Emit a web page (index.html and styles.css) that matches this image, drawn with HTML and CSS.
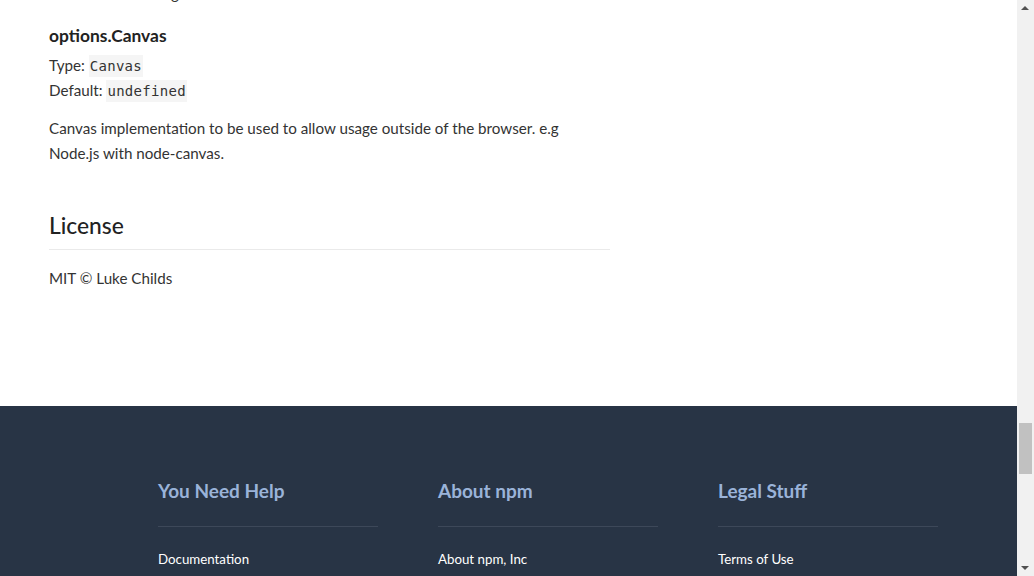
FILE: index.html
```html
<!DOCTYPE html>
<html>
<head>
<meta charset="utf-8">
<link rel="stylesheet" href="styles.css">
</head>
<body>
<div class="page">
  <main class="readme">
    <p class="cut">Disables smoothing</p>
    <h3 class="opt">options.Canvas</h3>
    <p class="meta">Type: <code>Canvas</code><br>Default: <code>undefined</code></p>
    <p class="desc">Canvas implementation to be used to allow usage outside of the browser. e.g Node.js with node-canvas.</p>
    <h2 class="lic">License</h2>
    <p class="mit">MIT © Luke Childs</p>
  </main>
  <footer class="foot">
    <div class="cols">
      <div class="col">
        <h4 class="colhead">You Need Help</h4>
        <a class="link">Documentation</a>
      </div>
      <div class="col">
        <h4 class="colhead">About npm</h4>
        <a class="link">About npm, Inc</a>
      </div>
      <div class="col">
        <h4 class="colhead">Legal Stuff</h4>
        <a class="link">Terms of Use</a>
      </div>
    </div>
  </footer>
</div>
<div class="scrollbar">
  <span class="arrow up"></span>
  <span class="thumb"></span>
  <span class="arrow down"></span>
</div>
</body>
</html>
```
FILE: styles.css
```css
html, body {
  margin: 0;
  padding: 0;
  height: 576px;
  overflow: hidden;
  background: #fff;
}
body {
  font-family: Lato, "Open Sans", sans-serif;
  color: #333;
}
.page {
  width: 1017px;
  height: 576px;
  display: flex;
  flex-direction: column;
  overflow: hidden;
}
.readme {
  width: 561px;
  padding-left: 49px;
  padding-bottom: 115px;
  font-size: 15.2px;
  line-height: 25px;
}
.readme p {
  margin: 0;
}
.cut {
  margin-top: -19px !important;
}
.opt {
  margin: 19px 0 0;
  font-size: 17.4px;
  line-height: 22px;
  font-weight: 700;
  color: #222;
}
.meta {
  margin-top: 6px !important;
}
code {
  font-family: "DejaVu Sans Mono", monospace;
  font-size: 14px;
  line-height: 1;
  background: #f5f5f5;
  padding: 3px 1px;
  letter-spacing: 0.3px;
}
.desc {
  margin-top: 13px !important;
}
.lic {
  margin: 44px 0 0;
  font-size: 22.8px;
  line-height: 30px;
  font-weight: 500;
  color: #222;
  padding-bottom: 9px;
  border-bottom: 1px solid #eaeaea;
}
.mit {
  margin-top: 16px !important;
}
.foot {
  flex: 1;
  background: #283445;
  padding-top: 73px;
}
.cols {
  display: grid;
  grid-template-columns: 220px 220px 220px;
  column-gap: 60px;
  padding-left: 158px;
}
.col {
  display: flex;
  flex-direction: column;
}
.colhead {
  margin: 0;
  font-size: 19px;
  line-height: 24px;
  font-weight: 700;
  color: #9ab3d9;
  padding-bottom: 23px;
  border-bottom: 1px solid #3d4859;
}
.link {
  margin-top: 22px;
  font-size: 13.3px;
  line-height: 20px;
  color: #fff;
}
.scrollbar {
  position: absolute;
  top: 0;
  right: 0;
  width: 17px;
  height: 576px;
  background: #f1f1f1;
}
.thumb {
  position: absolute;
  left: 2px;
  top: 423px;
  width: 13px;
  height: 51px;
  background: #c1c1c1;
}
.arrow {
  position: absolute;
  left: 4px;
  width: 0;
  height: 0;
  border-left: 4px solid transparent;
  border-right: 4px solid transparent;
}
.up {
  top: 6px;
  border-bottom: 4px solid #505050;
}
.down {
  bottom: 6px;
  border-top: 4px solid #505050;
}
```
